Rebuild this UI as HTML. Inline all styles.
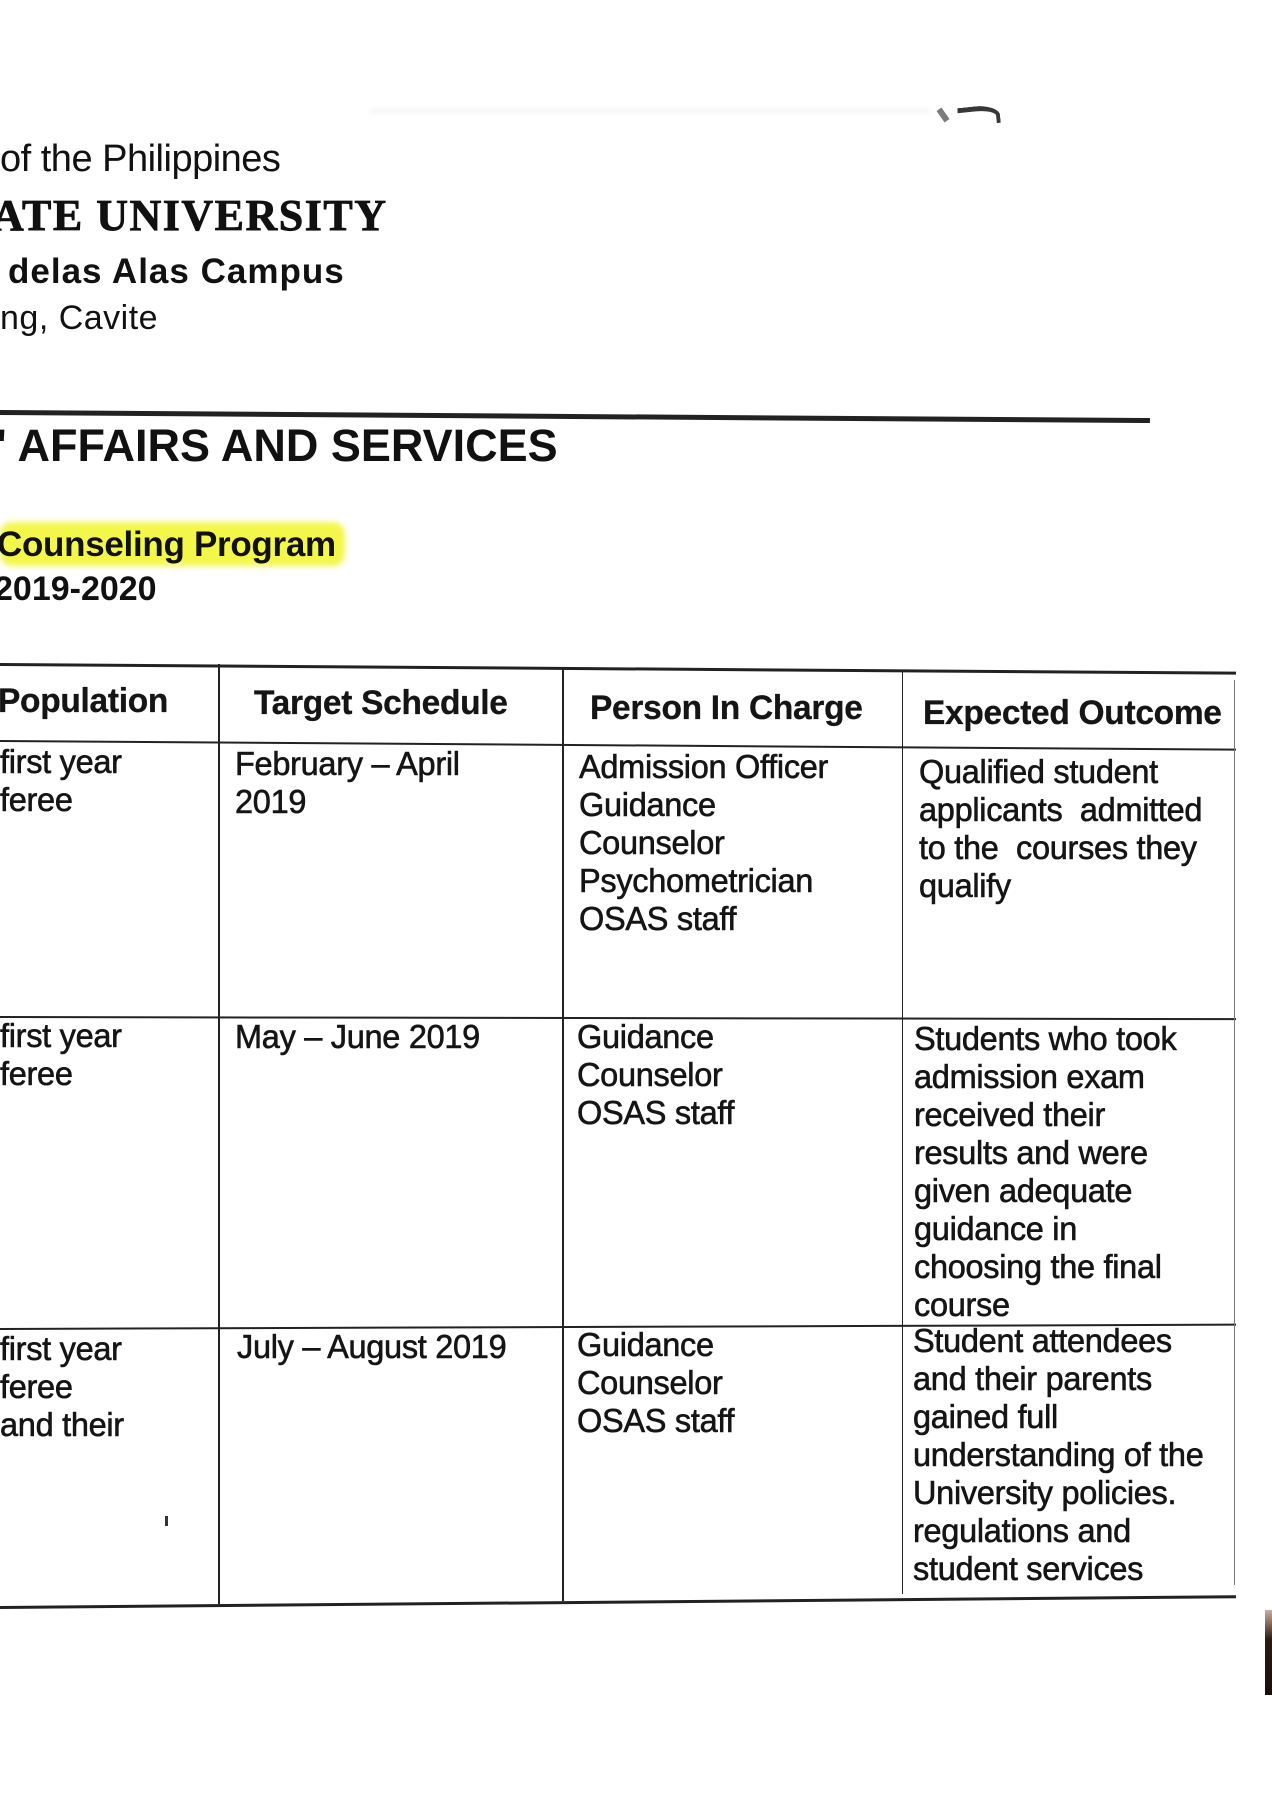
<!DOCTYPE html>
<html><head><meta charset="utf-8"><style>
html,body{margin:0;padding:0;background:#fff;}
body{width:1272px;height:1800px;position:relative;overflow:hidden;font-family:"Liberation Sans",sans-serif;color:#111;}
.a{position:absolute;white-space:nowrap;}
.t{position:absolute;font-size:33px;line-height:38px;white-space:nowrap;transform:scaleX(0.985);transform-origin:0 0;color:#151515;-webkit-text-stroke:0.6px #151515;letter-spacing:-0.3px;}
.h{font-weight:bold;font-size:34px;-webkit-text-stroke:0.3px #151515;}
.hl{position:absolute;background:#f3f74a;border-radius:12px;filter:blur(3px);}
.ln{position:absolute;background:#222;}
</style></head><body>
<div class="a" style="left:370px;top:108px;width:560px;height:6px;background:#f7f7f7;filter:blur(2px);"></div>
<div class="a" style="left:940px;top:108px;width:6px;height:14px;background:#444;transform:rotate(-35deg);opacity:.7"></div>
<div class="a" style="left:958px;top:106px;width:38px;height:14px;border-top:5px solid #222;border-right:4px solid #222;border-radius:0 60% 0 0;transform:rotate(-6deg);opacity:.9"></div>

<div class="a" style="left:0;top:138px;font-size:38px;letter-spacing:-0.5px;">of the Philippines</div>
<div class="a" style="left:-8px;top:190px;font-family:'Liberation Serif',serif;font-weight:bold;font-size:44px;letter-spacing:1.5px;-webkit-text-stroke:0.8px #111;">ATE UNIVERSITY</div>
<div class="a" style="left:8px;top:252px;font-size:35px;font-weight:bold;letter-spacing:1px;">delas Alas Campus</div>
<div class="a" style="left:0;top:299px;font-size:34px;letter-spacing:0.5px;">ng, Cavite</div>
<div class="ln" style="left:0;top:410px;width:1150px;height:5px;transform:rotate(0.4deg);transform-origin:0 0;"></div>
<div class="a" style="left:-4px;top:420px;font-size:45px;font-weight:bold;">' AFFAIRS AND SERVICES</div>

<div class="hl" style="left:0;top:522px;width:345px;height:44px;"></div>
<div class="a" style="left:-3px;top:525px;font-size:35px;font-weight:bold;letter-spacing:-0.3px;">Counseling Program</div>
<div class="a" style="left:-6px;top:570px;font-size:34px;font-weight:bold;">2019-2020</div>

<!-- table lines -->
<div class="ln" style="left:0;top:663px;width:1236px;height:3px;transform:rotate(0.4deg);transform-origin:0 0;"></div>
<div class="ln" style="left:0;top:740px;width:1236px;height:2px;transform:rotate(0.4deg);transform-origin:0 0;"></div>
<div class="ln" style="left:0;top:1016px;width:1236px;height:2px;transform:rotate(0.1deg);transform-origin:0 0;"></div>
<div class="ln" style="left:0;top:1328px;width:1236px;height:2px;transform:rotate(-0.2deg);transform-origin:0 0;"></div>
<div class="ln" style="left:0;top:1606px;width:1236px;height:3px;transform:rotate(-0.5deg);transform-origin:0 0;"></div>
<div class="ln" style="left:218px;top:664px;width:2px;height:940px;"></div>
<div class="ln" style="left:562px;top:667px;width:2px;height:934px;"></div>
<div class="ln" style="left:902px;top:670px;width:1px;height:924px;"></div>
<div class="ln" style="left:1234px;top:680px;width:1px;height:905px;background:#777;"></div>

<!-- header -->
<div class="t h" style="left:-2px;top:682px;">Population</div>
<div class="t h" style="left:254px;top:684px;">Target Schedule</div>
<div class="t h" style="left:590px;top:689px;">Person In Charge</div>
<div class="t h" style="left:923px;top:694px;">Expected Outcome</div>

<!-- row1 -->
<div class="t" style="left:0;top:743px;">first year<br>feree</div>
<div class="t" style="left:235px;top:745px;">February – April<br>2019</div>
<div class="t" style="left:579px;top:748px;">Admission Officer<br>Guidance<br>Counselor<br>Psychometrician<br>OSAS staff</div>
<div class="t" style="left:919px;top:753px;">Qualified student<br>applicants &nbsp;admitted<br>to the &nbsp;courses they<br>qualify</div>

<!-- row2 -->
<div class="t" style="left:0;top:1017px;">first year<br>feree</div>
<div class="t" style="left:235px;top:1018px;">May – June 2019</div>
<div class="t" style="left:577px;top:1018px;">Guidance<br>Counselor<br>OSAS staff</div>
<div class="t" style="left:914px;top:1020px;">Students who took<br>admission exam<br>received their<br>results and were<br>given adequate<br>guidance in<br>choosing the final<br>course</div>

<!-- row3 -->
<div class="t" style="left:0;top:1330px;">first year<br>feree<br>and their</div>
<div class="t" style="left:237px;top:1328px;">July – August 2019</div>
<div class="t" style="left:577px;top:1326px;">Guidance<br>Counselor<br>OSAS staff</div>
<div class="t" style="left:913px;top:1322px;">Student attendees<br>and their parents<br>gained full<br>understanding of the<br>University policies.<br>regulations and<br>student services</div>
<div class="a" style="left:165px;top:1516px;width:3px;height:10px;background:#333;"></div>

<div class="a" style="left:1265px;top:1610px;width:7px;height:85px;background:linear-gradient(#c9b0a0,#2a1a10 35%,#1a0e08);"></div>
</body></html>
